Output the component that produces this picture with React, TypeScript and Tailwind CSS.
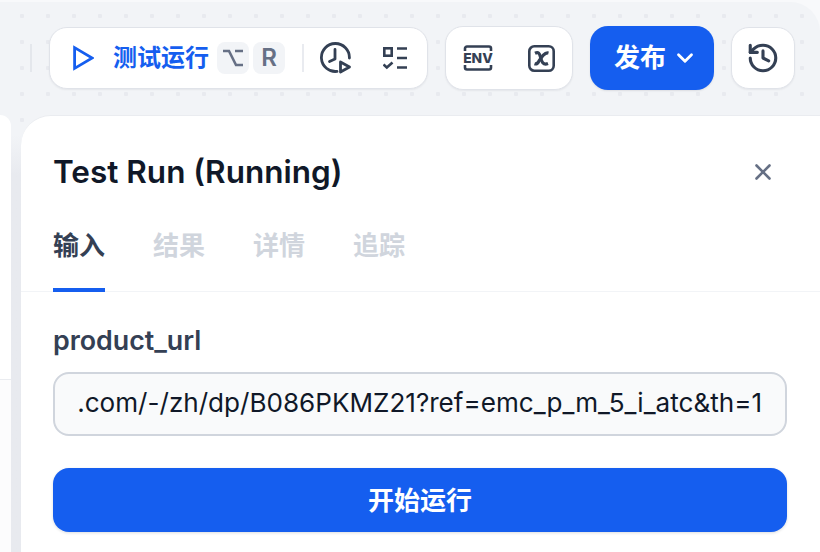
import { ChevronDown, History, X } from "lucide-react";

const font = "font-['Inter','Noto_Sans_CJK_SC',sans-serif]";

function PlayIcon() {
  return (
    <svg width="21" height="26" viewBox="0 0 21 26" fill="none" stroke="#155eef" strokeWidth="2.8" strokeLinejoin="miter">
      <path d="M1.6 2.6 L19.2 13 L1.6 23.4 Z" />
    </svg>
  );
}

function OptionIcon() {
  return (
    <svg width="20" height="18" viewBox="0 0 20 18" fill="none" stroke="#667085" strokeWidth="2.6">
      <path d="M0 2 H6 L13 16 H20" />
      <path d="M12 2 H20" />
    </svg>
  );
}

function ClockPlayIcon() {
  return (
    <svg width="32" height="32" viewBox="0 0 32 32" fill="none" stroke="#344054" strokeWidth="2.8" strokeLinejoin="round" strokeLinecap="round">
      <path d="M17 29.4 A14 14 0 1 1 29.4 16" />
      <path d="M15 7.5 V17 L9.5 19.5" />
      <path d="M20.5 20 L29.5 25 L20.5 30 Z" />
    </svg>
  );
}

function ChecklistIcon() {
  return (
    <svg width="24" height="24" viewBox="0 0 24 24" fill="none" stroke="#344054" strokeWidth="2.6">
      <rect x="1.3" y="2.3" width="7.4" height="7.4" />
      <path d="M0.5 18.5 L3.8 21.5 L9.5 16.5" />
      <path d="M14 2.5 H24 M14 12 H24 M14 21.5 H24" />
    </svg>
  );
}

function EnvIcon() {
  return (
    <svg width="30" height="26" viewBox="0 0 30 26" fill="none">
      <path d="M2 6 V3.5 A2 2 0 0 1 4 1.5 H26 A2 2 0 0 1 28 3.5 V6 M2 20 V22.5 A2 2 0 0 0 4 24.5 H26 A2 2 0 0 0 28 22.5 V20" stroke="#344054" strokeWidth="2.6" />
      <text x="15" y="18.2" textAnchor="middle" fontFamily="Inter, sans-serif" fontWeight="800" fontSize="13.8" fill="#344054">ENV</text>
    </svg>
  );
}

function VariableIcon() {
  return (
    <svg width="27" height="27" viewBox="0 0 27 27" fill="none" stroke="#344054">
      <rect x="1.3" y="1.3" width="24.4" height="24.4" rx="5" strokeWidth="2.6" />
      <path d="M7 8.2 C10.5 6.5 11.5 8.5 12.5 12 C13.5 16.5 15 20.5 20 18.5" strokeWidth="3.2" />
      <path d="M20.5 8 C16.5 7 13.5 12 11 16 C10 18 8.5 19.5 6.5 18.8" strokeWidth="3.2" />
    </svg>
  );
}

const card = "bg-white border border-[#e0e3e9] shadow-[0_1px_2px_rgba(16,24,40,0.06)]";

export default function App() {
  return (
    <div className={`w-[820px] h-[552px] overflow-hidden bg-[#f8f9fb] pt-[2px] ${font}`}>
      <div className="h-[550px] flex flex-col rounded-tr-[30px] overflow-hidden bg-[#f2f4f7] bg-[radial-gradient(circle_at_22px_14px,#e8eaef_2px,transparent_2.5px)] bg-[size:26px_26px]">
        <div className="h-[113px] shrink-0 flex items-start pt-[24px] pl-[30px]">
          <div className="w-[2px] h-[28px] mt-[18px] bg-[#e4e7ec]" />
          <div className={`ml-[17px] mt-[1px] w-[379px] h-[62px] rounded-[18px] flex items-center pl-[23px] ${card}`}>
            <PlayIcon />
            <span className="ml-[19px] w-[95px] text-[24px] leading-[32px] font-semibold text-[#155eef] whitespace-nowrap">测试运行</span>
            <span className="ml-[9px] w-[32px] h-[32px] rounded-[8px] bg-[#f2f4f7] flex items-center justify-center"><OptionIcon /></span>
            <span className="ml-[4px] w-[32px] h-[32px] rounded-[8px] bg-[#f2f4f7] flex items-center justify-center text-[24px] leading-none font-semibold text-[#667085]">R</span>
            <span className="ml-[17px] w-[2px] h-[28px] bg-[#e9ebf0]" />
            <span className="ml-[16px] flex"><ClockPlayIcon /></span>
            <span className="ml-[31px] flex"><ChecklistIcon /></span>
          </div>
          <div className={`ml-[17px] w-[128px] h-[64px] rounded-[18px] flex items-center pl-[17px] gap-[35px] ${card}`}>
            <EnvIcon />
            <VariableIcon />
          </div>
          <button className="ml-[17px] w-[124px] h-[64px] rounded-[18px] bg-[#155eef] shadow-[0_1px_2px_rgba(16,24,40,0.1)] flex items-center pl-[24px] text-white">
            <span className="text-[26px] leading-[32px] font-semibold">发布</span>
            <ChevronDown size={26} strokeWidth={2.6} className="ml-[6px]" />
          </button>
          <button className={`ml-[17px] mt-[1px] w-[64px] h-[62px] rounded-[18px] flex items-center justify-center ${card}`}>
            <History size={34} strokeWidth={2.2} color="#344054" />
          </button>
        </div>
        <div className="flex-1 flex min-h-0">
          <div className="w-[11px] shrink-0 flex flex-col rounded-tr-[24px] bg-white overflow-hidden">
            <div className="h-[265px] border-b border-[#eaecf0]" />
            <div className="flex-1 bg-[#fcfcfd]" />
          </div>
          <div className="w-[10px] shrink-0 mt-[20px] bg-gradient-to-b from-[#f2f4f7] to-[#e8eaef] to-[40px]" />
          <div className="flex-1 min-w-0 bg-white rounded-tl-[30px] border-t border-[#eaecf0] flex flex-col">
            <div className="pt-[36px] pl-[32px] pr-[33px] flex items-center justify-between">
              <h1 className="text-[31.5px] leading-[40px] font-semibold text-[#101828] whitespace-nowrap">Test Run (Running)</h1>
              <X size={26} strokeWidth={2.4} color="#667085" className="mr-[11px]" />
            </div>
            <div className="mt-[34px] pl-[32px] flex gap-[48px] border-b border-[#f2f4f7] h-[66px]">
              <div className="h-[66px] border-b-[4px] border-[#155eef] text-[26px] leading-[40px] font-semibold text-[#344054]">输入</div>
              <div className="text-[26px] leading-[40px] font-semibold text-[#d0d5dd]">结果</div>
              <div className="text-[26px] leading-[40px] font-semibold text-[#d0d5dd]">详情</div>
              <div className="text-[26px] leading-[40px] font-semibold text-[#d0d5dd]">追踪</div>
            </div>
            <div className="pt-[28px] pl-[32px] pr-[33px]">
              <div className="text-[26.8px] leading-[40px] font-semibold text-[#344054]">product_url</div>
              <div className="mt-[12px] h-[64px] rounded-[16px] border-2 border-[#d0d5dd] bg-[#f9fafb] flex items-center justify-end overflow-hidden px-[23px] pb-[2px] text-[26.08px] text-[#101828] whitespace-nowrap">
                .com/-/zh/dp/B086PKMZ21?ref=emc_p_m_5_i_atc&amp;th=1
              </div>
              <button className="mt-[32px] w-full h-[64px] rounded-[16px] bg-[#155eef] shadow-[0_1px_3px_rgba(16,24,40,0.15)] text-white text-[26px] font-semibold">开始运行</button>
            </div>
          </div>
        </div>
      </div>
    </div>
  );
}
